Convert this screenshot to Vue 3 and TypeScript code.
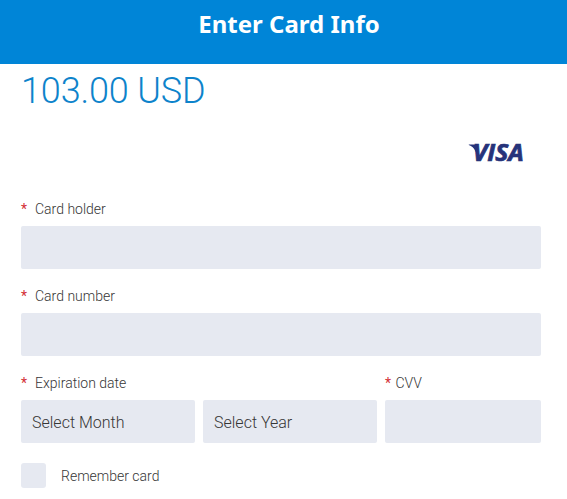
<script setup lang="ts">
import { ref } from 'vue'

const amount = ref<string>('103.00 USD')
const holder = ref<string>('')
const cardNumber = ref<string>('')
const cvv = ref<string>('')
const remember = ref<boolean>(false)
</script>

<template>
  <main class="page">
    <header class="header">
      <h1 class="title">Enter Card Info</h1>
    </header>
    <form class="form" @submit.prevent>
      <div class="amount">{{ amount }}</div>
      <div class="brands">
        <svg class="visa" viewBox="0 0 60 32" role="img" aria-label="Visa">
          <path d="M0.8 7.6H6.5Q8.3 7.6 8.8 9.2L10.8 19L7.4 14.2Q5.3 9.4 0.8 8Z" />
          <text x="4.8" y="24" textLength="50.8" lengthAdjust="spacingAndGlyphs">VISA</text>
        </svg>
      </div>
      <label class="field">
        <span class="label"><i class="star">*</i>Card holder</span>
        <input v-model="holder" class="box" type="text" />
      </label>
      <label class="field">
        <span class="label"><i class="star">*</i>Card number</span>
        <input v-model="cardNumber" class="box" type="text" />
      </label>
      <div class="row">
        <div class="field expiry">
          <span class="label"><i class="star">*</i>Expiration date</span>
          <div class="selects">
            <div class="box select">Select Month</div>
            <div class="box select">Select Year</div>
          </div>
        </div>
        <label class="field cvv">
          <span class="label"><i class="star">*</i>CVV</span>
          <input v-model="cvv" class="box" type="text" />
        </label>
      </div>
      <label class="remember">
        <input v-model="remember" class="check" type="checkbox" />
        <span class="caption">Remember card</span>
      </label>
    </form>
  </main>
</template>

<style>
body {
  margin: 0;
  background: #fff;
}
</style>

<style scoped>
.page {
  height: 499px;
  overflow: hidden;
  font-family: Roboto, sans-serif;
  font-weight: 300;
  color: #363636;
}
.header {
  height: 64px;
  box-sizing: border-box;
  padding-top: 8px;
  padding-left: 11px;
  background: #0085d7;
  text-align: center;
}
.title {
  margin: 0;
  font: 700 24px/32px "Noto Sans", sans-serif;
  color: #fff;
}
.form {
  width: 520px;
  padding-left: 21px;
}
.amount {
  height: 54px;
  font-size: 36px;
  line-height: 55px;
  letter-spacing: -0.15px;
  color: #0d83cb;
}
.brands {
  display: flex;
  justify-content: flex-end;
  height: 75px;
  padding: 19px 13px 0 0;
  box-sizing: border-box;
}
.visa {
  width: 60px;
  height: 32px;
  fill: #26337a;
}
.visa text {
  font: italic 700 22.5px/1 "Open Sans", sans-serif;
  stroke: #26337a;
  stroke-width: 0.7;
}
.field {
  display: block;
  height: 87px;
}
.label {
  display: flex;
  height: 33px;
  line-height: 32px;
  font-size: 14px;
  font-weight: 300;
}
.star {
  width: 14px;
  font-style: normal;
  font-weight: 400;
  color: #d32f36;
}
.box {
  display: block;
  width: 100%;
  height: 43px;
  box-sizing: border-box;
  margin: 0;
  padding: 0 11px;
  border: 0;
  border-radius: 2px;
  outline: 0;
  background: #e6e9f1;
  font: 300 16px/45px Roboto, sans-serif;
}
.row {
  display: flex;
  gap: 8px;
}
.expiry {
  width: 356px;
}
.selects {
  display: flex;
  gap: 8px;
}
.cvv {
  width: 156px;
}
.cvv .star {
  width: 10.5px;
}
.remember {
  display: flex;
  align-items: center;
  gap: 15px;
  height: 25px;
  margin-top: 9px;
  font-size: 14px;
  line-height: 24px;
}
.caption {
  padding-top: 1px;
}
.check {
  appearance: none;
  width: 25px;
  height: 25px;
  margin: 0;
  border-radius: 3px;
  background: #e6e9f1;
}
</style>
